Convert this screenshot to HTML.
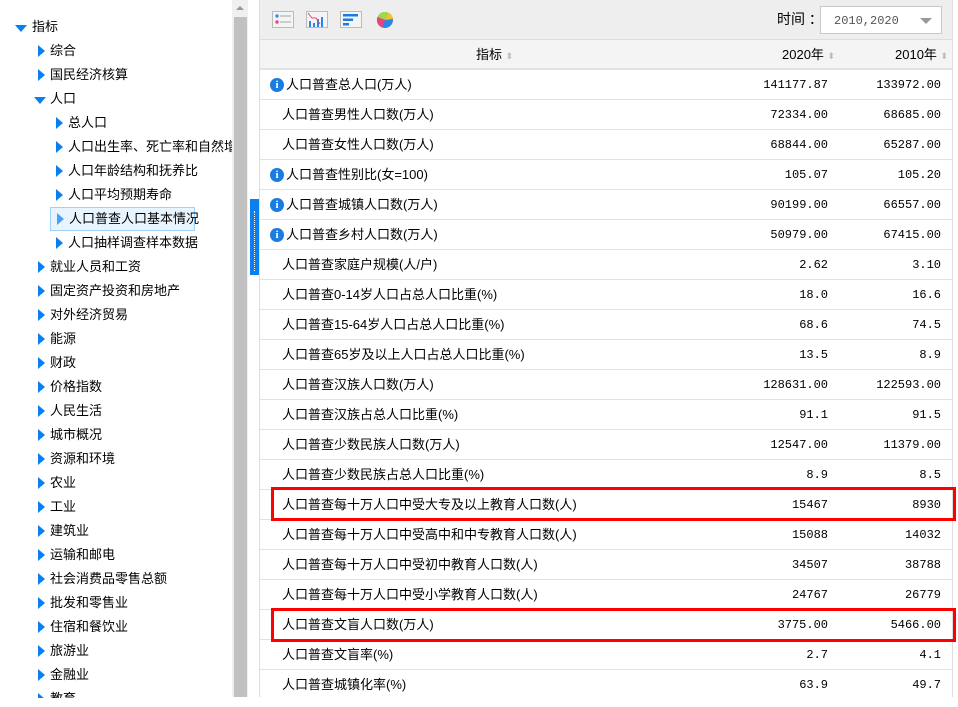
<!DOCTYPE html>
<html><head><meta charset="utf-8"><style>
*{margin:0;padding:0;box-sizing:border-box}
body{width:958px;height:707px;overflow:hidden;background:#fff;font-family:"Liberation Sans","Noto Sans CJK SC",sans-serif;font-size:13px;color:#000;position:relative}
.t{position:absolute;white-space:nowrap;line-height:16px}
.tri{position:absolute;width:0;height:0;border-top:6px solid transparent;border-bottom:6px solid transparent;border-left:7px solid #0a7ff0}
.down{position:absolute;width:0;height:0;border-left:6px solid transparent;border-right:6px solid transparent;border-top:7px solid #0a7ff0}
.row{position:absolute;left:260px;width:692px;height:30px;border-bottom:1px solid #e2e2e2}
.row .n{position:absolute;left:22px;top:7px;white-space:nowrap;line-height:16px;height:16px}
.row .a,.row .b{position:absolute;top:8px;font-family:"Liberation Mono",monospace;font-size:12px;line-height:14px}
.row .a{right:124px}.row .b{right:11px}
.info{position:absolute;left:10px;top:8px;width:14px;height:14px;border-radius:50%;background:#1a7be0;color:#fff;font:bold 11px/14px "Liberation Serif",serif;text-align:center}
.red{position:absolute;left:271px;width:685px;height:34px;border:3px solid #f00}
</style></head><body>
<!-- tree -->
<div class="down" style="left:15px;top:25px"></div><div class="t" style="left:32px;top:19px">指标</div>
<div class="tri" style="left:38px;top:45px"></div><div class="t" style="left:50px;top:43px">综合</div>
<div class="tri" style="left:38px;top:69px"></div><div class="t" style="left:50px;top:67px">国民经济核算</div>
<div class="down" style="left:34px;top:97px"></div><div class="t" style="left:50px;top:91px">人口</div>
<div class="tri" style="left:56px;top:117px"></div><div class="t" style="left:68px;top:115px">总人口</div>
<div class="tri" style="left:56px;top:141px"></div><div class="t" style="left:68px;top:139px;width:164px;overflow:hidden">人口出生率、死亡率和自然增长率</div>
<div class="tri" style="left:56px;top:165px"></div><div class="t" style="left:68px;top:163px">人口年龄结构和抚养比</div>
<div class="tri" style="left:56px;top:189px"></div><div class="t" style="left:68px;top:187px">人口平均预期寿命</div>
<div style="position:absolute;left:50px;top:207px;width:145px;height:24px;background:#e9f5fe;border:1px solid #9bd2fb"></div>
<div class="tri" style="left:57px;top:213px;border-left-color:#4aa0f5"></div><div class="t" style="left:69px;top:211px">人口普查人口基本情况</div>
<div class="tri" style="left:56px;top:237px"></div><div class="t" style="left:68px;top:235px">人口抽样调查样本数据</div>
<div class="tri" style="left:38px;top:261px"></div><div class="t" style="left:50px;top:259px">就业人员和工资</div>
<div class="tri" style="left:38px;top:285px"></div><div class="t" style="left:50px;top:283px">固定资产投资和房地产</div>
<div class="tri" style="left:38px;top:309px"></div><div class="t" style="left:50px;top:307px">对外经济贸易</div>
<div class="tri" style="left:38px;top:333px"></div><div class="t" style="left:50px;top:331px">能源</div>
<div class="tri" style="left:38px;top:357px"></div><div class="t" style="left:50px;top:355px">财政</div>
<div class="tri" style="left:38px;top:381px"></div><div class="t" style="left:50px;top:379px">价格指数</div>
<div class="tri" style="left:38px;top:405px"></div><div class="t" style="left:50px;top:403px">人民生活</div>
<div class="tri" style="left:38px;top:429px"></div><div class="t" style="left:50px;top:427px">城市概况</div>
<div class="tri" style="left:38px;top:453px"></div><div class="t" style="left:50px;top:451px">资源和环境</div>
<div class="tri" style="left:38px;top:477px"></div><div class="t" style="left:50px;top:475px">农业</div>
<div class="tri" style="left:38px;top:501px"></div><div class="t" style="left:50px;top:499px">工业</div>
<div class="tri" style="left:38px;top:525px"></div><div class="t" style="left:50px;top:523px">建筑业</div>
<div class="tri" style="left:38px;top:549px"></div><div class="t" style="left:50px;top:547px">运输和邮电</div>
<div class="tri" style="left:38px;top:573px"></div><div class="t" style="left:50px;top:571px">社会消费品零售总额</div>
<div class="tri" style="left:38px;top:597px"></div><div class="t" style="left:50px;top:595px">批发和零售业</div>
<div class="tri" style="left:38px;top:621px"></div><div class="t" style="left:50px;top:619px">住宿和餐饮业</div>
<div class="tri" style="left:38px;top:645px"></div><div class="t" style="left:50px;top:643px">旅游业</div>
<div class="tri" style="left:38px;top:669px"></div><div class="t" style="left:50px;top:667px">金融业</div>
<div style="position:absolute;left:0;top:690px;width:232px;height:8px;overflow:hidden"><div class="tri" style="left:38px;top:3px"></div><div class="t" style="left:50px;top:1px">教育</div></div>
<!-- scrollbar -->
<div style="position:absolute;left:232px;top:0;width:16px;height:697px;background:#f0f0f0"></div>
<div style="position:absolute;left:236px;top:6px;width:0;height:0;border-left:4px solid transparent;border-right:4px solid transparent;border-bottom:4px solid #999"></div>
<div style="position:absolute;left:234px;top:17px;width:13px;height:680px;background:#c1c1c1"></div>
<!-- blue strip -->
<div style="position:absolute;left:250px;top:199px;width:9px;height:76px;background:#0a7ff0"></div>
<div style="position:absolute;left:254px;top:211px;width:0;height:60px;border-left:1px dotted #fff"></div>
<!-- right panel -->
<div style="position:absolute;left:259px;top:0;width:1px;height:697px;background:#ddd"></div>
<div style="position:absolute;left:952px;top:0;width:1px;height:697px;background:#ddd"></div>
<div style="position:absolute;left:260px;top:0;width:692px;height:40px;background:#eeeeee;border-bottom:1px solid #ddd"></div>
<!-- toolbar icons -->
<svg style="position:absolute;left:272px;top:11px" width="22" height="18"><rect x="0.5" y="0.5" width="21" height="16" fill="#f4f4f4" stroke="#bbb"/><circle cx="5" cy="5" r="1.7" fill="#3b8ff0"/><circle cx="5" cy="11" r="1.7" fill="#e8458a"/><rect x="8" y="4" width="11" height="2" fill="#ccc"/><rect x="8" y="10" width="11" height="2" fill="#ccc"/></svg>
<svg style="position:absolute;left:306px;top:11px" width="22" height="18"><rect x="0.5" y="0.5" width="21" height="16" fill="#f4f4f4" stroke="#bbb"/><rect x="3" y="10" width="2" height="6" fill="#2a86e8"/><rect x="7" y="12" width="2" height="4" fill="#2a86e8"/><rect x="11" y="8" width="2" height="8" fill="#2a86e8"/><rect x="15" y="6" width="2" height="10" fill="#2a86e8"/><path d="M2 2 L6 7 L10 7 L14 13" stroke="#e8457a" fill="none"/></svg>
<svg style="position:absolute;left:340px;top:11px" width="22" height="18"><rect x="0.5" y="0.5" width="21" height="16" fill="#f4f4f4" stroke="#bbb"/><rect x="3" y="3" width="15" height="2.5" fill="#1a7be0"/><rect x="3" y="7.5" width="10" height="2.5" fill="#1a7be0"/><rect x="3" y="12" width="6" height="2.5" fill="#1a7be0"/></svg>
<svg style="position:absolute;left:376px;top:11px" width="18" height="18"><circle cx="9" cy="9" r="8" fill="#2a86e8"/><path d="M9 9 L1.5 6 A8 8 0 0 1 12 1.5 Z" fill="#9fd94a"/><path d="M9 9 L12 1.5 A8 8 0 0 1 17 8 Z" fill="#f2c230"/><path d="M9 9 L6 16.5 A8 8 0 0 1 1.5 6 Z" fill="#e8457a"/></svg>
<div class="t" style="left:777px;top:11px;font-size:14px">时间 ：</div>
<div style="position:absolute;left:820px;top:6px;width:122px;height:28px;background:#fff;border:1px solid #c8c8c8"></div>
<div class="t" style="left:834px;top:13px;font-size:12px;color:#555;font-family:'Liberation Mono',monospace">2010,2020</div>
<div style="position:absolute;left:920px;top:18px;width:0;height:0;border-left:6px solid transparent;border-right:6px solid transparent;border-top:6px solid #999"></div>
<!-- header -->
<div style="position:absolute;left:260px;top:40px;width:692px;height:30px;background:#f4f4f4;border-bottom:2px solid #e2e2e2"></div>
<div class="t" style="left:476px;top:47px">指标 <span style="color:#bbb;font-size:9px">⬍</span></div>
<div class="t" style="left:782px;top:47px">2020年 <span style="color:#bbb;font-size:9px">⬍</span></div>
<div class="t" style="left:895px;top:47px">2010年 <span style="color:#bbb;font-size:9px">⬍</span></div>
<!-- rows -->
<div class="row" style="top:70px"><div class="info">i</div><div class="n" style="left:26px">人口普查总人口(万人)</div><div class="a">141177.87</div><div class="b">133972.00</div></div>
<div class="row" style="top:100px"><div class="n">人口普查男性人口数(万人)</div><div class="a">72334.00</div><div class="b">68685.00</div></div>
<div class="row" style="top:130px"><div class="n">人口普查女性人口数(万人)</div><div class="a">68844.00</div><div class="b">65287.00</div></div>
<div class="row" style="top:160px"><div class="info">i</div><div class="n" style="left:26px">人口普查性别比(女=100)</div><div class="a">105.07</div><div class="b">105.20</div></div>
<div class="row" style="top:190px"><div class="info">i</div><div class="n" style="left:26px">人口普查城镇人口数(万人)</div><div class="a">90199.00</div><div class="b">66557.00</div></div>
<div class="row" style="top:220px"><div class="info">i</div><div class="n" style="left:26px">人口普查乡村人口数(万人)</div><div class="a">50979.00</div><div class="b">67415.00</div></div>
<div class="row" style="top:250px"><div class="n">人口普查家庭户规模(人/户)</div><div class="a">2.62</div><div class="b">3.10</div></div>
<div class="row" style="top:280px"><div class="n">人口普查0-14岁人口占总人口比重(%)</div><div class="a">18.0</div><div class="b">16.6</div></div>
<div class="row" style="top:310px"><div class="n">人口普查15-64岁人口占总人口比重(%)</div><div class="a">68.6</div><div class="b">74.5</div></div>
<div class="row" style="top:340px"><div class="n">人口普查65岁及以上人口占总人口比重(%)</div><div class="a">13.5</div><div class="b">8.9</div></div>
<div class="row" style="top:370px"><div class="n">人口普查汉族人口数(万人)</div><div class="a">128631.00</div><div class="b">122593.00</div></div>
<div class="row" style="top:400px"><div class="n">人口普查汉族占总人口比重(%)</div><div class="a">91.1</div><div class="b">91.5</div></div>
<div class="row" style="top:430px"><div class="n">人口普查少数民族人口数(万人)</div><div class="a">12547.00</div><div class="b">11379.00</div></div>
<div class="row" style="top:460px"><div class="n">人口普查少数民族占总人口比重(%)</div><div class="a">8.9</div><div class="b">8.5</div></div>
<div class="row" style="top:490px"><div class="n">人口普查每十万人口中受大专及以上教育人口数(人)</div><div class="a">15467</div><div class="b">8930</div></div>
<div class="row" style="top:520px"><div class="n">人口普查每十万人口中受高中和中专教育人口数(人)</div><div class="a">15088</div><div class="b">14032</div></div>
<div class="row" style="top:550px"><div class="n">人口普查每十万人口中受初中教育人口数(人)</div><div class="a">34507</div><div class="b">38788</div></div>
<div class="row" style="top:580px"><div class="n">人口普查每十万人口中受小学教育人口数(人)</div><div class="a">24767</div><div class="b">26779</div></div>
<div class="row" style="top:610px"><div class="n">人口普查文盲人口数(万人)</div><div class="a">3775.00</div><div class="b">5466.00</div></div>
<div class="row" style="top:640px"><div class="n">人口普查文盲率(%)</div><div class="a">2.7</div><div class="b">4.1</div></div>
<div class="row" style="top:670px;border-bottom:none"><div class="n">人口普查城镇化率(%)</div><div class="a">63.9</div><div class="b">49.7</div></div>
<div style="position:absolute;left:232px;top:697px;width:726px;height:10px;background:#fff"></div>
<div style="position:absolute;left:0;top:698px;width:232px;height:9px;background:#fff"></div>
<div class="red" style="top:487px"></div>
<div class="red" style="top:608px"></div>
</body></html>
